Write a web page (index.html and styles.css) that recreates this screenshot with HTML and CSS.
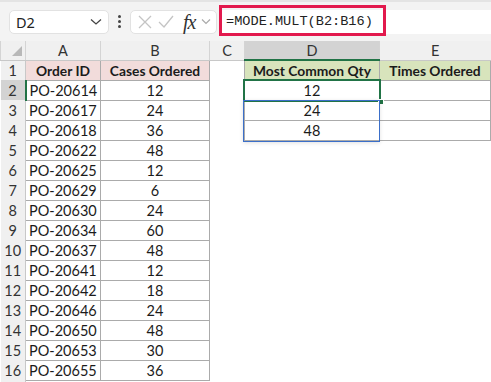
FILE: index.html
```html
<!DOCTYPE html>
<html lang="en">
  <head>
    <meta charset="UTF-8" />
    <title>MODE.MULT</title>
    <link rel="stylesheet" href="styles.css">
  </head>
  <body>
    <div class="toolbar">
      <div class="namebox">
        <span>D2</span>
        <svg width="12" height="8" viewBox="0 0 12 8"><path d="M1 1.5 L6 6 L11 1.5" fill="none" stroke="#444" stroke-width="1.3"/></svg>
      </div>
      <div class="dots"><i></i><i></i><i></i></div>
      <div class="fxbox">
        <svg width="14" height="14" viewBox="0 0 14 14"><path d="M1 1 L13 13 M13 1 L1 13" stroke="#c4c4c4" stroke-width="1.3"/></svg>
        <svg width="16" height="14" viewBox="0 0 16 14"><path d="M1 7 L6 12 L15 1" fill="none" stroke="#c4c4c4" stroke-width="1.3"/></svg>
        <span class="fx">fx</span>
        <svg width="10" height="7" viewBox="0 0 10 7"><path d="M1 1.5 L5 5.5 L9 1.5" fill="none" stroke="#aaa" stroke-width="1.2"/></svg>
      </div>
      <div class="formula">=MODE.MULT(B2:B16)</div>
      <div class="callout"></div>
    </div>

    <div class="sheet">
      <table class="grid">
        <colgroup>
          <col style="width:25px" />
          <col style="width:75px" />
          <col style="width:109px" />
          <col style="width:35px" />
          <col style="width:135px" />
          <col style="width:111px" />
        </colgroup>
        <thead>
          <tr class="colhead">
            <th class="corner"><span class="tri"></span></th>
            <th>A</th>
            <th>B</th>
            <th>C</th>
            <th class="sel">D</th>
            <th>E</th>
          </tr>
        </thead>
        <tbody id="rows"></tbody>
      </table>
      <div class="active"><span class="handle"></span></div>
      <div class="spill"></div>
    </div>

    <script>
      const orders = [
        ["PO-20614", 12], ["PO-20617", 24], ["PO-20618", 36], ["PO-20622", 48],
        ["PO-20625", 12], ["PO-20629", 6], ["PO-20630", 24], ["PO-20634", 60],
        ["PO-20637", 48], ["PO-20641", 12], ["PO-20642", 18], ["PO-20646", 24],
        ["PO-20650", 48], ["PO-20653", 30], ["PO-20655", 36]
      ];
      const modes = [12, 24, 48];

      let html = '<tr><td class="rh">1</td><td class="pink b">Order ID</td>' +
        '<td class="pink b">Cases Ordered</td><td></td>' +
        '<td class="green b">Most Common Qty</td><td class="green b">Times Ordered</td></tr>';

      orders.forEach((o, i) => {
        const r = i + 2;
        const hasMode = i < modes.length;
        html += '<tr><td class="rh' + (r === 2 ? ' sel' : '') + '">' + r + '</td>' +
          '<td class="b id">' + o[0] + '</td>' +
          '<td class="b num">' + o[1] + '</td><td></td>' +
          (hasMode
            ? '<td class="b num">' + modes[i] + '</td><td class="b"></td>'
            : '<td></td><td></td>') +
          '</tr>';
      });

      html += '<tr class="tail"><td class="rh"></td><td></td><td></td><td></td><td></td><td></td></tr>';
      document.getElementById("rows").innerHTML = html;
    </script>
  </body>
</html>
```

FILE: styles.css
```css
* {
  box-sizing: border-box;
}
body {
  margin: 0;
  width: 491px;
  height: 382px;
  overflow: hidden;
  background-color: #fff;
  font-family: "Lato", "Liberation Sans", sans-serif;
  color: #1b1b1b;
}

/* formula bar */
.toolbar {
  position: relative;
  height: 41px;
  background-color: #f3f3f3;
  border-top: 2px solid #e4e4e4;
  display: flex;
  align-items: center;
  padding: 0 0 0 9px;
}
.namebox {
  width: 100px;
  height: 24px;
  background-color: #fff;
  border: 1px solid #e2e2e2;
  border-radius: 5px;
  display: flex;
  align-items: center;
  justify-content: space-between;
  padding: 0 6px 0 6px;
  font-family: "Noto Sans", sans-serif;
  font-size: 14.5px;
  color: #222;
}
.dots {
  width: 21px;
  display: flex;
  flex-direction: column;
  align-items: center;
  gap: 2px;
}
.dots i {
  width: 3px;
  height: 3px;
  background-color: #444;
  border-radius: 50%;
}
.fxbox {
  width: 87px;
  height: 24px;
  background-color: #fff;
  border: 1px solid #e2e2e2;
  border-radius: 5px;
  display: flex;
  align-items: center;
  gap: 6px;
  padding: 0 0 0 7px;
}
.fx {
  font-family: "Liberation Serif", serif;
  font-style: italic;
  font-size: 20px;
  line-height: 20px;
  color: #333;
  margin-left: 3px;
  letter-spacing: -1px;
}
.formula {
  flex: 1;
  height: 24px;
  margin-left: 3px;
  background-color: #fff;
  font-family: "Liberation Mono", monospace;
  font-size: 13.6px;
  line-height: 24px;
  padding-left: 6px;
  color: #222;
}
.callout {
  position: absolute;
  left: 219px;
  top: 3px;
  width: 167px;
  height: 31px;
  border: 3px solid #e2194d;
}

/* sheet */
.sheet {
  position: relative;
}
.grid {
  border-collapse: collapse;
  table-layout: fixed;
  width: 491px;
  font-size: 14.5px;
}
.grid td,
.grid th {
  height: 20px;
  padding: 0;
  white-space: nowrap;
  overflow: hidden;
}
.colhead th {
  height: 19px;
  background-color: #f0f0f0;
  font-weight: normal;
  color: #333;
  font-size: 14.5px;
  border-left: 1px solid #d4d4d4;
  border-bottom: 1px solid #c8c8c8;
  text-align: center;
}
.colhead th.sel {
  background-color: #d3d3d3;
  border-bottom: 2px solid #217346;
}
.corner {
  position: relative;
}
.tri {
  position: absolute;
  right: 3px;
  bottom: 4px;
  width: 0;
  height: 0;
  border-left: 10px solid transparent;
  border-bottom: 10px solid #b8b8b8;
}
.rh {
  background-color: #f0f0f0;
  text-align: center;
  color: #333;
  border-right: 1px solid #c8c8c8;
}
.rh.sel {
  background-color: #d3d3d3;
  border-right: 2px solid #217346;
}
.b {
  border: 1px solid #ababab;
}
.pink {
  background-color: #f2dcdb;
  font-weight: bold;
  font-size: 13.8px;
  text-align: center;
}
.green {
  background-color: #d8e4bc;
  font-weight: bold;
  font-size: 13.8px;
  text-align: center;
}
.id {
  padding-left: 3px !important;
}
.num {
  text-align: center;
}

/* selection overlays */
.active {
  position: absolute;
  left: 243px;
  top: 38px;
  width: 138px;
  height: 23px;
  border: 2px solid #217346;
}
.handle {
  position: absolute;
  right: -5px;
  bottom: -5px;
  width: 6px;
  height: 6px;
  background-color: #217346;
  border: 1px solid #fff;
}
.spill {
  position: absolute;
  left: 243px;
  top: 59px;
  width: 137px;
  height: 42px;
  border: 1px solid #3b6fc9;
  box-shadow: 0 1px 4px rgba(0, 0, 0, 0.12);
  pointer-events: none;
}
```
